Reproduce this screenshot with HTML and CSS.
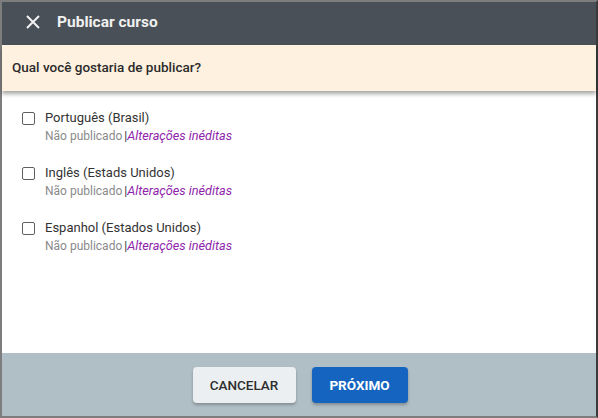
FILE: index.html
```html
<!DOCTYPE html>
<html lang="pt">
<head>
<meta charset="utf-8">
<link rel="stylesheet" href="styles.css">
</head>
<body>
<div class="dialog">
  <header class="topbar">
    <svg class="close" width="14" height="14" viewBox="0 0 14 14"><path d="M1 1L13 13M13 1L1 13" stroke="#f2f2f2" stroke-width="2" fill="none"/></svg>
    <span class="title">Publicar curso</span>
  </header>
  <div class="question">Qual você gostaria de publicar?</div>
  <main class="list">
    <div class="item">
      <span class="box"></span>
      <div class="texts">
        <div class="name">Português (Brasil)</div>
        <div class="status">Não publicado <span class="sep">|</span><em>Alterações inéditas</em></div>
      </div>
    </div>
    <div class="item">
      <span class="box"></span>
      <div class="texts">
        <div class="name">Inglês (Estads Unidos)</div>
        <div class="status">Não publicado <span class="sep">|</span><em>Alterações inéditas</em></div>
      </div>
    </div>
    <div class="item">
      <span class="box"></span>
      <div class="texts">
        <div class="name">Espanhol (Estados Unidos)</div>
        <div class="status">Não publicado <span class="sep">|</span><em>Alterações inéditas</em></div>
      </div>
    </div>
  </main>
  <footer class="actions">
    <button class="btn cancel">CANCELAR</button>
    <button class="btn next">PRÓXIMO</button>
  </footer>
</div>
</body>
</html>
```
FILE: styles.css
```css
* { box-sizing: border-box; }
html, body { margin: 0; padding: 0; }
body { width: 598px; height: 418px; background: #fff; font-family: Roboto, "Noto Sans", sans-serif; overflow: hidden; }
.dialog {
  width: 598px; height: 418px;
  border-top: 2px solid #7d7d7d;
  border-left: 2px solid #7d7d7d;
  border-bottom: 2px solid #7d7d7d;
  border-right: 2px solid #3a3a3a;
  display: flex; flex-direction: column;
  background: #fff;
}
.topbar {
  height: 43px; flex: none;
  background: #4a5058;
  display: flex; align-items: center;
  padding-left: 24px; padding-bottom: 3px;
}
.close { margin-right: 17px; }
.title { color: #f0f0f0; font-weight: 700; font-size: 15.5px; }
.question {
  height: 46px; flex: none;
  background: #fff1df;
  display: flex; align-items: center;
  padding-left: 10px; padding-bottom: 2px;
  font-size: 13.5px; font-weight: 500; color: #2b2b2b;
  box-shadow: 0 3px 4px rgba(0,0,0,0.35);
  position: relative; z-index: 1;
}
.list { flex: 1; padding: 18px 0 0 20px; display: flex; flex-direction: column; gap: 19px; }
.item { display: flex; align-items: flex-start; }
.box {
  width: 13px; height: 13px; margin-top: 3px; margin-right: 10px;
  border: 1.5px solid #5f5f5f; border-radius: 2px; flex: none;
}
.name { font-size: 13px; color: #333; line-height: 18px; }
.status { font-size: 12px; color: #8a8a8a; line-height: 18px; white-space: nowrap; }
.sep { color: #333; margin-left: -1px; }
.status em { color: #8e24aa; font-style: italic; font-size: 12.7px; }
.actions {
  height: 63px; flex: none;
  background: #b0bec5;
  display: flex; justify-content: center; align-items: center;
  gap: 16px; padding-left: 2px;
}
.btn {
  height: 36px; border: none; border-radius: 4px;
  font-family: Roboto, sans-serif; font-weight: 500; font-size: 13.5px;
  box-shadow: 0 2px 3px rgba(0,0,0,0.25);
}
.cancel { width: 103px; background: #eceff1; color: #2e2e2e; }
.next { width: 96px; background: #1565c0; color: #fff; font-weight: 700; }
```
